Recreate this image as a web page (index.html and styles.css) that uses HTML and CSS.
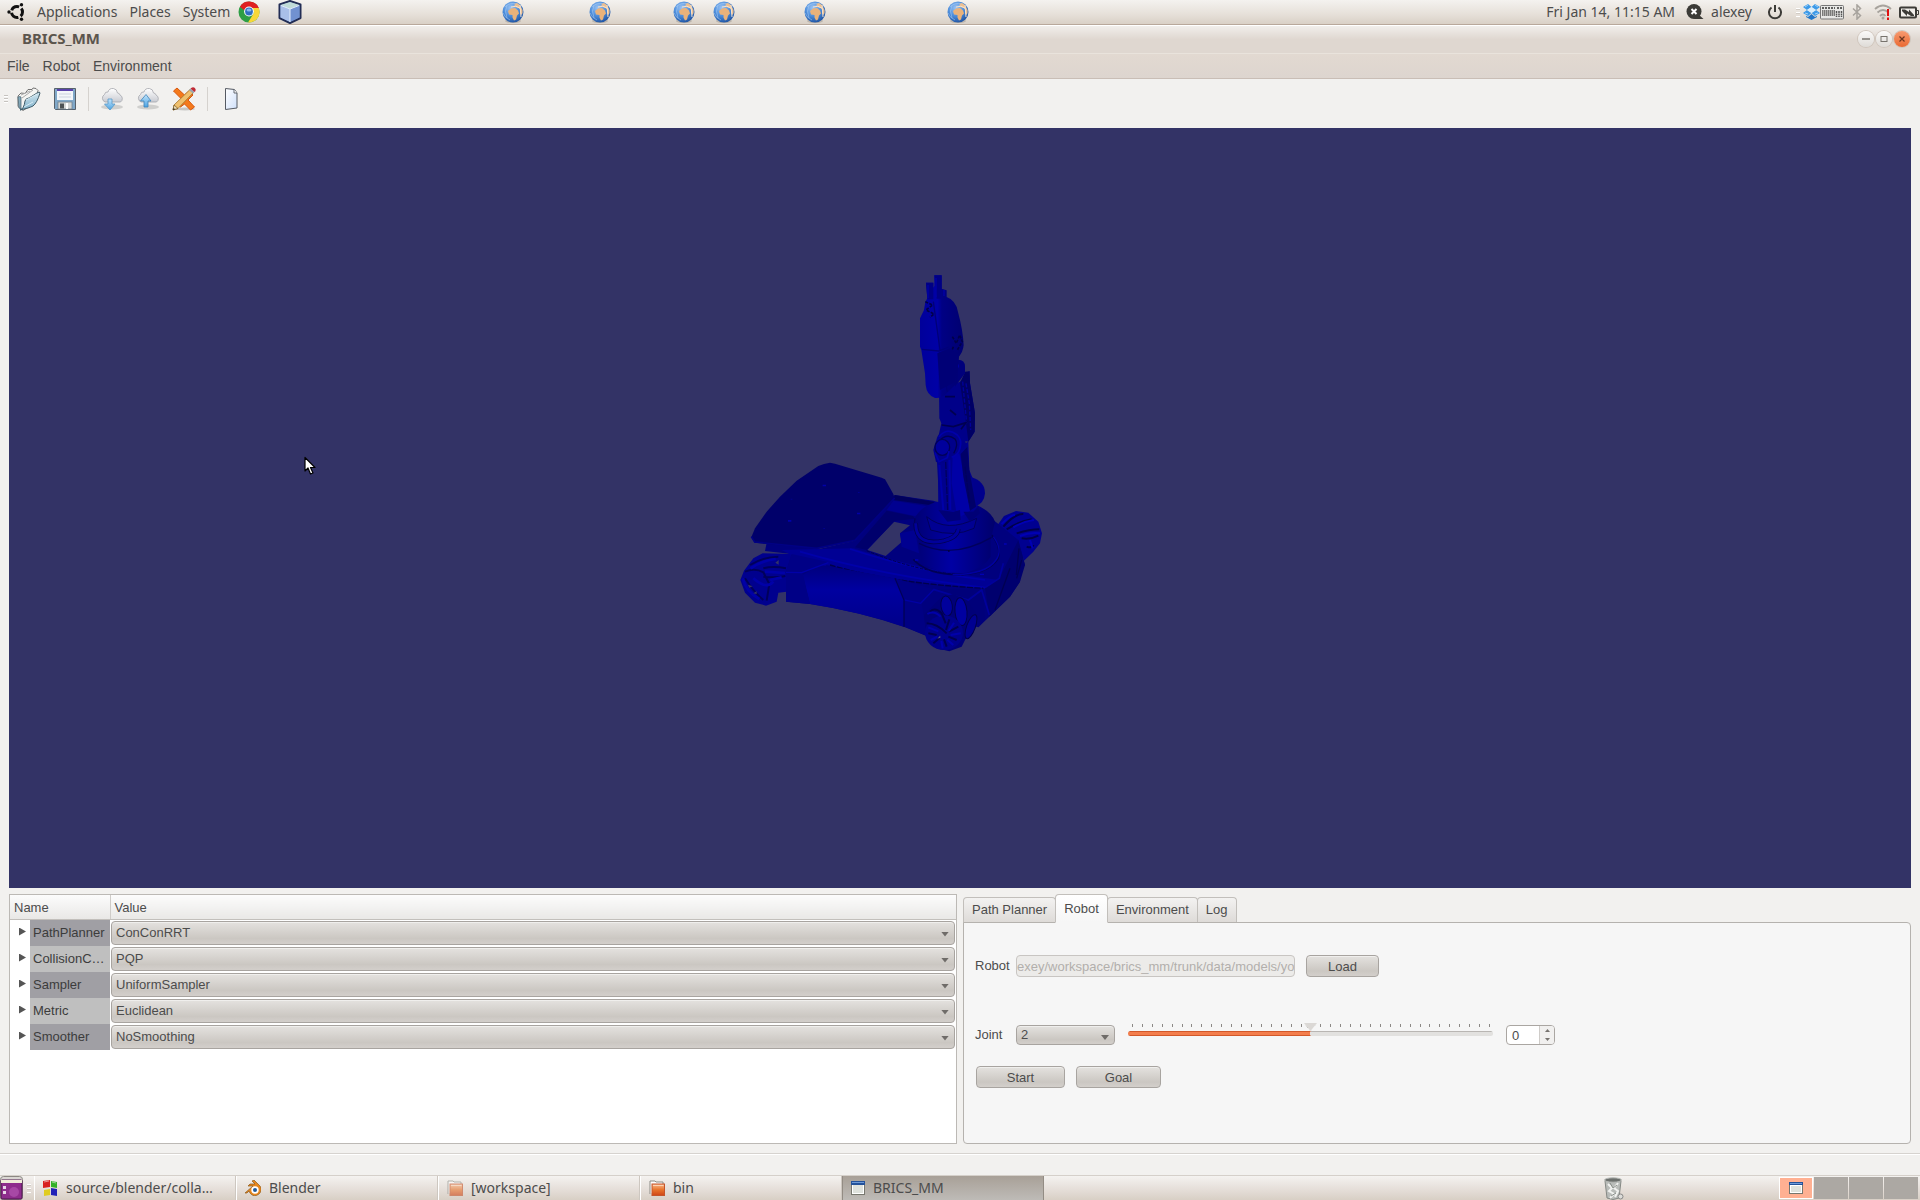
FILE: index.html
```html
<!DOCTYPE html>
<html lang="en">
<head>
<meta charset="utf-8">
<title>BRICS_MM</title>
<link rel="stylesheet" href="styles.css">
</head>
<body>
<svg class="defs" width="0" height="0" aria-hidden="true">
  <defs>
    <radialGradient id="sea" cx="40%" cy="30%" r="75%"><stop offset="0" stop-color="#9cc4f4"/><stop offset=".5" stop-color="#4f8fdc"/><stop offset="1" stop-color="#1c4f9e"/></radialGradient>
    <linearGradient id="sheet" x1="0" y1="0" x2="1" y2="1"><stop offset="0" stop-color="#fff"/><stop offset="1" stop-color="#cfe0fb"/></linearGradient>
    <linearGradient id="folder" x1="0" y1="0" x2="0" y2="1"><stop offset="0" stop-color="#d3e8f1"/><stop offset="1" stop-color="#7fb0c9"/></linearGradient>
    <linearGradient id="cloud" x1="0" y1="0" x2="0" y2="1"><stop offset="0" stop-color="#fff"/><stop offset="1" stop-color="#c9cbd2"/></linearGradient>
    <linearGradient id="arrow" x1="0" y1="0" x2="0" y2="1"><stop offset="0" stop-color="#c3e4fa"/><stop offset="1" stop-color="#4ba3e3"/></linearGradient>
    <linearGradient id="orange" x1="0" y1="0" x2="0" y2="1"><stop offset="0" stop-color="#f9b98c"/><stop offset=".5" stop-color="#e8742c"/><stop offset="1" stop-color="#cf4415"/></linearGradient>
  </defs>
  <symbol id="globe" viewBox="0 0 22 22">
    <ellipse cx="11" cy="20" rx="8" ry="2" fill="#000" opacity=".15"/>
    <circle cx="11" cy="11" r="10.500" fill="url(#sea)"/>
    <path d="M3 6Q8 1 15 3M1 12Q3 17 8 19M5 4Q2 10 5 17" fill="none" stroke="#a9ccf4" stroke-width=".8" opacity=".7"/>
    <path d="M6 10l3-2.500 4-.5 3 2.500 1 3-2 2-1 4-2 1-1.500-3V14L7 13.500z" fill="#eab27a"/>
    <path d="M12 3l3-1 3 2 2.500 5v3l-1 2-1.500-2 .5-3-2-2-3-1-2-1 2-1z" fill="#edbf90"/>
    <path d="M9 6q5-2 9 1M18 4l1 12" stroke="#f7e3cd" stroke-width="1" fill="none"/>
  </symbol>
  <symbol id="window" viewBox="0 0 14 14">
    <rect x=".5" y=".5" width="13" height="13" fill="#fff" stroke="#77776f"/><rect width="14" height="4" fill="#24529a"/><rect x="1" y="1" width="12" height="1" fill="#6d9ad8"/><rect x="2" y="4" width="10" height="8" fill="#dfe2dd"/>
  </symbol>
  <symbol id="files" viewBox="0 0 16 16">
    <path d="M1 14V1h5l1 1h7v4" fill="#fff" stroke="#8a8a84"/><rect x="3" y="4" width="12.500" height="11.500" fill="url(#orange)" stroke="#c4542a"/><path d="M4 5.500h10.500" stroke="#fbd3b5"/>
  </symbol>
</svg>

<header class="panel">
  <nav class="panel-menu" aria-label="Desktop">
    <svg width="18" height="18" viewBox="0 0 18 18" aria-hidden="true"><circle cx="10" cy="9" r="5.500" fill="none" stroke="#111" stroke-width="3" stroke-dasharray="9 2.500" stroke-dashoffset="4.500"/><circle cx="2" cy="9" r="1.700" fill="#111"/><circle cx="14.500" cy="1.800" r="1.700" fill="#111"/><circle cx="14.500" cy="16.200" r="1.700" fill="#111"/></svg>
    <a href="#applications">Applications</a>
    <a href="#places">Places</a>
    <a href="#system">System</a>
    <a class="browser" href="#browser" aria-label="Browser"><svg width="22" height="22" viewBox="0 0 22 22"><circle cx="11" cy="11" r="10.500" fill="#2e9e45"/><path d="M1.900 5.800A10.500 10.500 0 0 1 20.800 7H11a5 5 0 0 0-4.500 2.500z" fill="#e02020"/><path d="M20.800 7A10.500 10.500 0 0 1 10 21.400l5-8A5 5 0 0 0 13 7z" fill="#f8d838"/><circle cx="11" cy="10.500" r="4.900" fill="#fff"/><circle cx="11" cy="10.500" r="3.900" fill="#2f6fc0"/><ellipse cx="11" cy="9" rx="2.500" ry="1.500" fill="#8ab8ec"/></svg></a>
    <a class="cube" href="#cube" aria-label="Virtual machines"><svg width="24" height="24" viewBox="0 0 24 24"><path d="M12 1l10.500 3.500V18L12 23 1.500 18V4.500z" fill="#7fa0d8" stroke="#222d55" stroke-width="2" stroke-linejoin="round"/><path d="M2.500 5L12 2l9.500 3L12 9z" fill="#c0dcd8"/><path d="M2.500 5L12 9v13l-9.500-4.500z" fill="#a9bfe8"/><path d="M21.500 5L12 9v13l9.500-4.500z" fill="#7191d0"/><path d="M12 9v13M3 5.500l9 3.500 9-3.500" stroke="#e4eefc" fill="none"/></svg></a>
  </nav>
  <div class="launchers">
    <a href="#web1" aria-label="Web 1"><svg width="22" height="22"><use href="#globe"/></svg></a>
    <a href="#web2" aria-label="Web 2"><svg width="22" height="22"><use href="#globe"/></svg></a>
    <a href="#web3" aria-label="Web 3"><svg width="22" height="22"><use href="#globe"/></svg></a>
    <a href="#web4" aria-label="Web 4"><svg width="22" height="22"><use href="#globe"/></svg></a>
    <a href="#web5" aria-label="Web 5"><svg width="22" height="22"><use href="#globe"/></svg></a>
    <a href="#web6" aria-label="Web 6"><svg width="22" height="22"><use href="#globe"/></svg></a>
  </div>
  <div class="tray">
    <span class="clock">Fri Jan 14, 11:15 AM</span>
    <svg width="18" height="18" viewBox="0 0 18 18" aria-hidden="true"><circle cx="8" cy="8.500" r="7.500" fill="#3c3b37"/><path d="M11 10l6.500 6H8z" fill="#3c3b37"/><path d="M5.500 6l5 5m0-5l-5 5" stroke="#fff" stroke-width="2"/></svg>
    <span class="user">alexey</span>
    <svg width="16" height="16" viewBox="0 0 16 16" aria-hidden="true"><path d="M4.500 3.500a6 6 0 1 0 7 0M8 1v7" fill="none" stroke="#3c3b37" stroke-width="2"/></svg>
    <div class="status">
      <span class="grip"></span>
      <svg width="17" height="16" viewBox="0 0 17 16" aria-hidden="true"><path d="M5 0l3.500 3L4 6 0 3zM12 0L8.500 3 13 6l4-3zM0 9l4-3 4.500 3L5 12zM17 9l-4-3-4.500 3 3.500 3z" fill="#3d9ae8"/><path d="M8.500 3L13 6 8.500 9 4 6z" fill="#d9eefc"/><path d="M3 12v1l5.500 3 5.500-3v-1l-2 1-3.500-3L5 13z" fill="#2377c8"/><path d="M2 3l3-2M12 1l3 2M2 9l3 1M15 9l-3 1" stroke="#9fd2f8"/></svg>
      <svg width="24" height="15" viewBox="0 0 24 15" aria-hidden="true"><rect x=".5" y=".5" width="23" height="13.500" rx="1" fill="#e8e8e6" stroke="#777"/><path d="M2 3h13M17 3h5" stroke="#333" stroke-width="1.500" stroke-dasharray="2 1"/><path d="M2 6h13M2 8h13M2 10h13" stroke="#555" stroke-width="1.700" stroke-dasharray="1.500 .5"/><path d="M16.500 6v6M19 6v6M21.500 6v6" stroke="#555" stroke-width="1.500" stroke-dasharray="2 .5"/></svg>
      <svg class="bluetooth" width="10" height="16" viewBox="0 0 10 16" aria-hidden="true"><path d="M1 4.500l7.500 7L5 15V1l3.500 3.500-7.500 7" fill="none" stroke="#a7a39d" stroke-width="1.500"/></svg>
      <svg class="wifi" width="18" height="16" viewBox="0 0 18 16" aria-hidden="true"><path d="M1 5q8-7 16 0M3.500 8.500q5.500-5 11 0M6 12q3-3 5.500 0" fill="none" stroke="#a7a39d" stroke-width="1.800"/><circle cx="9" cy="14" r="1.500" fill="#a7a39d"/><path d="M14 5v7m0 1.500V16" stroke="#e01010" stroke-width="2"/></svg>
      <svg width="20" height="13" viewBox="0 0 20 13" aria-hidden="true"><rect x="1" y="1.500" width="16" height="10" rx="1" fill="#f0eeea" stroke="#3c3b37" stroke-width="2"/><path d="M18 4.500h1.500v4H18" stroke="#3c3b37" fill="none"/><path d="M3 3.500h3l4 2.500V3.500l5 5.500v1h-3L8 7.500V10L3 5z" fill="#3c3b37"/></svg>
    </div>
  </div>
</header>

<main class="app">
  <div class="titlebar">
    <h1>BRICS_MM</h1>
    <div class="window-buttons">
      <button aria-label="Minimize"><svg width="8" height="8"><path d="M0 4h8" stroke="#77736d" stroke-width="1.500"/></svg></button>
      <button aria-label="Maximize"><svg width="8" height="8"><rect x="1" y="1.500" width="6" height="5" fill="none" stroke="#77736d"/></svg></button>
      <button class="close" aria-label="Close"><svg width="8" height="8"><path d="M1.500 1.500l5 5m0-5l-5 5" stroke="#6b3620" stroke-width="1.200"/></svg></button>
    </div>
  </div>
  <nav class="menubar" aria-label="Application"><a href="#file">File</a><a href="#robot">Robot</a><a href="#environment">Environment</a></nav>

  <div class="toolbar" role="toolbar" aria-label="Main">
    <span class="grip dark"></span>
    <button aria-label="Open"><svg width="24" height="24" viewBox="0 0 24 24"><path d="M1 9l3-3 4 .5 3-4h4l1-1.500 3 .5 2 2-4 13-11 7-5-4z" fill="#f5f5f3" stroke="#666" stroke-width=".9"/><path d="M4 8l9-4M5 11l11-8" stroke="#aaa"/><path d="M1 10q2-1 3 0v12l-2-1z" fill="#86aabb" stroke="#44606d" stroke-width=".7"/><path d="M3 23q4-1 5-9 1-3 4-3l8-5q3-2 3 0-3 10-7 13-2 1-5 2z" fill="url(#folder)" stroke="#3f5c69"/><path d="M9 13l11-6M7 20l9-5" stroke="#e6f5fb" stroke-width=".8"/></svg></button>
    <button aria-label="Save"><svg width="24" height="24" viewBox="0 0 24 24"><path d="M1.500 1.500h21v21h-20l-1-1z" fill="#80a8c8" stroke="#57616b"/><rect x="4" y="2" width="16" height="11" fill="#f3f6fa"/><path d="M4 3h16" stroke="#5a43ab" stroke-width="2"/><path d="M6 7h12M6 10h12" stroke="#ccd3df"/><rect x="5" y="15" width="14" height="7" fill="#d5d7d5" stroke="#6b7a86" stroke-width=".7"/><rect x="7" y="16.500" width="4" height="5" fill="#4d5254"/><path d="M14 16v6" stroke="#fff" stroke-width="2"/></svg></button>
    <span class="separator"></span>
    <button aria-label="Download"><svg width="24" height="24" viewBox="0 0 24 24"><ellipse cx="12" cy="20" rx="11" ry="2.500" fill="#000" opacity=".14"/><path d="M5 15a4.200 4.200 0 0 1-.5-7.500Q5 4.500 8 5q1-4 5.500-3.500Q17 2 17.500 6q2 0 2.500 2a4 4 0 0 1 .5 7z" fill="url(#cloud)" stroke="#a4a6ac" stroke-width=".8"/><path d="M8 12h4v5h3l-5 6-5.500-6H8z" fill="url(#arrow)" stroke="#5598c8" stroke-width=".8"/></svg></button>
    <button aria-label="Upload"><svg width="24" height="24" viewBox="0 0 24 24"><ellipse cx="12" cy="20" rx="11" ry="2.500" fill="#000" opacity=".14"/><path d="M5 15a4.200 4.200 0 0 1-.5-7.500Q5 4.500 8 5q1-4 5.500-3.500Q17 2 17.500 6q2 0 2.500 2a4 4 0 0 1 .5 7z" fill="url(#cloud)" stroke="#a4a6ac" stroke-width=".8"/><path d="M8 20h4v-6h3L10 7.500 4.500 14H8z" fill="url(#arrow)" stroke="#3d83ba" stroke-width=".8"/></svg></button>
    <button aria-label="Clear"><svg width="24" height="24" viewBox="0 0 24 24"><ellipse cx="13" cy="22" rx="10" ry="1.500" fill="#000" opacity=".18"/><path d="M1.500 4L5 1l7.500 7L17 4l4 4-5 5 6.500 7-4 3-6-6-4 3-4-3 5-5z" fill="#f47a1c" stroke="#d9560d"/><path d="M1 23l1-5L18 2.500l3.500 3L6 21.500z" fill="#efc06e" stroke="#a3712b" stroke-width=".8"/><path d="M1 23l1-5 4 3.500z" fill="#eadbb5" stroke="#71551f" stroke-width=".7"/><path d="M1 23l.6-2 1.500 1.200z" fill="#222"/><path d="M17 3l1.500-1.500 4 3.500L21 6.500z" fill="#9aa5b0"/><path d="M18.500 1.500Q22-1 23.500 2q.5 2-1 3z" fill="#c02a35"/></svg></button>
    <span class="separator"></span>
    <button aria-label="New"><svg width="24" height="24" viewBox="0 0 24 24"><path d="M6.500 1.500l9 1L18 6v15l-11.500 1.500z" fill="url(#sheet)" stroke="#555a63" stroke-linejoin="round"/><path d="M15 2.500V6h3" fill="#fff" stroke="#555a63" stroke-width=".9"/></svg></button>
  </div>

  <section class="viewport" aria-label="3D view">
    <svg class="robot" width="340" height="410" viewBox="0 0 1020 1230" role="img" aria-label="Mobile manipulator">
      <defs>
        <linearGradient id="skirt" x1="0" y1="0" x2="0" y2="1"><stop offset="0" stop-color="#00007c"/><stop offset=".4" stop-color="#0000a0"/><stop offset="1" stop-color="#00008a"/></linearGradient>
        <linearGradient id="drum" x1="0" y1="0" x2="1" y2="0"><stop offset="0" stop-color="#000074"/><stop offset=".45" stop-color="#0000a4"/><stop offset="1" stop-color="#00006c"/></linearGradient>
        <linearGradient id="head" x1="0" y1="0" x2="1" y2="0"><stop offset="0" stop-color="#00009a"/><stop offset=".4" stop-color="#0000a6"/><stop offset=".5" stop-color="#000084"/><stop offset="1" stop-color="#000070"/></linearGradient>
      </defs>
      <!-- rear wheel -->
      <path d="M828 832L852 798 888 783 925 788 955 815 966 850 960 880 940 905 912 932 890 870z" fill="#000090"/>
      <path d="M850 830q35-40 60-38M860 838q40-25 75-30M890 850q40-12 68-12M905 865q25 5 50-8M920 890q18 5 20-5" stroke="#00004a" stroke-width="6" fill="none"/>
      <path d="M845 822q25-26 40-28M880 832q30-18 62-22M900 858q30-12 60-8M930 870l8 25" stroke="#0000b4" stroke-width="6" fill="none"/>
      <!-- front-left wheel -->
      <path d="M61 990L72 962 100 925 128 910 215 912 200 1025 175 1028 170 1055 138 1067 105 1058 75 1028z" fill="#00008e"/>
      <path d="M75 965q30-12 55 2l18 35-8 50M90 945q40-25 85-25M130 955q30-8 68 0M75 985q25 40 55 65M130 980q40 4 66-2" stroke="#00005a" stroke-width="6" fill="none"/>
      <path d="M92 955q30-22 75-28M135 965l60 4M150 990l35-8M100 985q40 35 60 10M68 985q10 40 50 62" stroke="#0000a8" stroke-width="8" fill="none"/>
      <path d="M84 1004l14 5-10 4zM166 938l10-8v14zM100 1030l10-6v8z" fill="#333366"/>
      <!-- chassis -->
      <path fill-rule="evenodd" d="M140 878L300 896 405 872 524 735 640 752 820 810 870 850 895 870 915 945 902 960 900 995 870 1040 808 1100 775 1132 720 1120 620 1158 555 1132Q420 1085 270 1062L198 1055V965L215 912 135 903zM442 900L497 918 545 876 540 850 570 826 522 815z" fill="#00007e"/>
      <path d="M524 735L640 755 650 768 520 750z" fill="#00005c"/>
      <path d="M520 752L640 772 585 798 500 780z" fill="#000090"/>
      <path d="M500 782l80 17 5 8-60 5-85 88-35-8z" fill="#00006c"/>
      <path d="M185 900L400 895Q600 960 835 990L795 1013Q600 1010 320 945L300 960z" fill="#000094"/>
      <path d="M240 905Q500 980 795 1013M390 897Q600 965 795 990" stroke="#0000aa" stroke-width="5" fill="none"/>
      <path d="M330 945Q520 1000 790 1015" stroke="#00004c" stroke-width="4" fill="none" stroke-dasharray="18 4"/>
      <path d="M440 902Q590 965 730 975" stroke="#000050" stroke-width="3" fill="none" stroke-dasharray="10 4"/>
      <path d="M300 945Q420 965 525 985L552 1050V1130Q420 1085 270 1062L248 975z" fill="url(#skirt)"/>
      <path d="M198 965L215 912 325 936 248 970 270 1062 198 1055z" fill="#000086"/>
      <path d="M198 967L245 968 325 938" stroke="#0000a8" stroke-width="4" fill="none"/>
      <path d="M525 985L640 1018 605 1060 620 1158 555 1130V1052z" fill="#000083"/>
      <path d="M527 990L552 1050 602 1060 642 1018" stroke="#0000a4" stroke-width="4" fill="none"/>
      <path d="M525 985L552 1050V1130" stroke="#000058" stroke-width="4" fill="none"/>
      <path d="M640 1018L790 1016 795 1110 775 1132 745 1060z" fill="#00007a"/>
      <path d="M795 1013L838 985 895 870 915 945 900 995 870 1040 808 1100z" fill="#00006e"/>
      <path d="M640 1018L745 1050 785 1020 808 1095M795 1013L838 985 850 940" stroke="#00009c" stroke-width="5" fill="none"/>
      <path d="M905 930L890 985M870 955l-45 125M897 895l-8 80" stroke="#000052" stroke-width="4" fill="none"/>
      <path d="M810 850q35 35 25 75-35 55-145 48-75-6-110-45" fill="none" stroke="#000056" stroke-width="5"/>
      <path d="M820 860q30 40 8 70-30 44-130 44" fill="none" stroke="#0000a0" stroke-width="4"/>
      <path d="M540 850l45-10 12 70-52-20z" fill="#000090"/>
      <!-- top plate -->
      <path d="M330 638Q312 640 295 648L230 692 180 740 140 785 105 835 94 862 104 878 290 896 405 872 524 745 520 732 495 688 485 683 345 641z" fill="#00006a"/>
      <path d="M94 860l10 16 186 19 115-24L524 744" fill="none" stroke="#000084" stroke-width="5"/>
      <path d="M308 704h10v5h-10zM411 788h10v5h-10zM204 810h10v5h-10z" fill="#0000a8"/>
      <path d="M414 726h5v3h-5zM212 746h5v3h-5zM310 834h5v3h-5z" fill="#00008c"/>
      <!-- turntable -->
      <path d="M585 805Q600 770 650 755L770 765Q815 785 825 815L812 870V920Q795 950 740 968 660 975 605 940L597 890z" fill="url(#drum)"/>
      <path d="M585 805q-8 45 25 70M597 880q100 50 218-18" fill="none" stroke="#00005c" stroke-width="4"/>
      <path d="M620 800q60 50 150 5l-8 30q-60 28-130 5z" fill="#000092" stroke="#00005c" stroke-width="3"/>
      <path d="M587 820q0 70 85 52 40-10 43-35" fill="none" stroke="#000054" stroke-width="14"/>
      <path d="M587 820q0 70 85 52 40-10 43-35" fill="none" stroke="#00009a" stroke-width="9"/>
      <path d="M684 901h5v4h-5z" fill="#000038"/><path d="M585 930h10M780 973h12M852 882h8" stroke="#0000b4" stroke-width="4"/>
      <!-- lower arm -->
      <path d="M755 682Q795 695 795 730 793 760 765 770L745 760z" fill="#00008c"/>
      <path d="M650 620L745 575 748 660 758 685 772 770 760 785 655 780 654 690z" fill="#00008e"/>
      <path d="M698 620L718 610 735 690 750 782 722 800 708 780 695 700z" fill="#0000a6"/>
      <path d="M742 590L748 660 768 770 750 782 730 680 722 612z" fill="#000068"/>
      <path d="M658 645l12 135M688 630l3 150" stroke="#0000a8" stroke-width="6"/><path d="M677 635l6 145M735 650l14 110" stroke="#00005e" stroke-width="4" stroke-dasharray="22 3"/>
      <path d="M655 780l45 5 20-5 2 30-40 5zM730 785l30 0 15-15 5 20-30 25z" fill="#000076"/>
      <!-- middle arm and elbow -->
      <path d="M657 420L720 395 748 362 750 400 765 490 764 545 745 575 655 560 664 520 658 505z" fill="#000089"/>
      <path d="M720 400L735 365 749 364 750 400 765 490 764 545 745 575 738 520z" fill="#000064"/>
      <path d="M738 400l10 60 4 80M728 395l12 125" stroke="#00009a" stroke-width="4" fill="none" stroke-dasharray="12 5"/>
      <path d="M665 525l35 5 38-12-15 20M675 440h30M690 480l18 15" stroke="#000050" stroke-width="5" fill="none"/>
      <path d="M652 560Q665 535 690 537 725 540 735 570L740 590 700 620 670 640 648 636 640 600z" fill="#00008a"/>
      <path d="M657 560q25-30 55-5 15 15 8 40-5 20-25 27" fill="none" stroke="#0000aa" stroke-width="5"/>
      <path d="M655 575q25-28 50-8 12 15-4 43" fill="none" stroke="#000052" stroke-width="4"/>
      <ellipse cx="667" cy="592" rx="22" ry="24" fill="#00009c" stroke="#00005a" stroke-width="4"/>
      <path d="M645 608l12 27 25-12 5-20" fill="none" stroke="#0000aa" stroke-width="5"/>
      <!-- wrist and gripper -->
      <path d="M705 330Q735 325 735 350V370L705 410z" fill="#00007b"/><circle cx="710" cy="348" r="7" fill="#0000ae"/>
      <path d="M618 98h22v15l3-5V76h22v40l15 5v20q28 10 34 45 15 55 17 100-2 20-15 35L712 398 680 430Q665 446 645 444 620 435 617 405L615 370 604 300 600 290V205L612 180 616 155 622 145z" fill="url(#head)"/>
      <path d="M618 98h22v50h-18zM643 76h22v70h-15z" fill="#000084"/><path d="M624 105v40M648 84v58M672 120v18" stroke="#0000a8" stroke-width="4"/>
      <path d="M640 155l20 145M606 298l50 5 30-12M660 306l22 120" fill="none" stroke="#000078" stroke-width="4"/>
      <path d="M616 155l22 10-20 15 24 12-12 10M697 260l12 20 10-25 8 20-15 25M700 290l-8 22 18 15" fill="none" stroke="#000048" stroke-width="5" stroke-dasharray="9 4"/>
      <path d="M690 295l28 20-15 82-43 23-8-110z" fill="#000076"/>
      <!-- front wheel -->
      <path d="M612 1095L635 1070 665 1040 700 1032 740 1050 772 1095 770 1120 735 1170 725 1190 688 1204 650 1195 620 1165z" fill="#000078"/>
      <ellipse cx="680" cy="1068" rx="17" ry="30" fill="#00009c" stroke="#00004c" stroke-width="3" transform="rotate(-8 680 1068)"/>
      <ellipse cx="723" cy="1085" rx="18" ry="42" fill="#0000a0" stroke="#00004c" stroke-width="3" transform="rotate(-5 723 1085)"/>
      <ellipse cx="753" cy="1130" rx="13" ry="38" fill="#000090" stroke="#00004c" stroke-width="3" transform="rotate(20 753 1130)"/>
      <ellipse cx="672" cy="1148" rx="57" ry="52" fill="#00008a"/>
      <path d="M630 1085q15-15 35 5l12 30M620 1120q30 0 60 30M625 1150l25 5M640 1180l18-15M680 1190l-8-22M710 1170l-25-10M715 1130l-28 15M688 1108l-10 32" stroke="#000050" stroke-width="6" fill="none"/>
      <path d="M622 1092q20-12 40 8M625 1132l30 12M632 1170l20-10M668 1195l-4-22M700 1185l-18-16M722 1150l-30 5M702 1118l-16 25" stroke="#0000aa" stroke-width="6" fill="none"/>
      <path d="M652 1166l8-8v5zM655 1162l6-5v7z" fill="#555580"/>
    </svg>
    <svg class="pointer" width="12" height="20" viewBox="0 0 12 20" aria-hidden="true"><path d="M1 1.500V15l3-3 2.500 6 2.500-1-2.500-5.500H11z" fill="#fff" stroke="#000" stroke-width="1.200" stroke-linejoin="round"/></svg>
  </section>

  <div class="lower">
    <section class="tree" aria-label="Properties">
      <table>
        <thead><tr><th class="name-col">Name</th><th>Value</th></tr></thead>
        <tbody>
          <tr><td><div class="node"><button class="expander" aria-label="Expand PathPlanner"></button><label for="planner">PathPlanner</label></div></td><td class="value"><span class="combo"><select id="planner"><option>ConConRRT</option></select></span></td></tr>
          <tr><td><div class="node"><button class="expander" aria-label="Expand collision checker"></button><label for="collision">CollisionC…</label></div></td><td class="value"><span class="combo"><select id="collision"><option>PQP</option></select></span></td></tr>
          <tr><td><div class="node"><button class="expander" aria-label="Expand Sampler"></button><label for="sampler">Sampler</label></div></td><td class="value"><span class="combo"><select id="sampler"><option>UniformSampler</option></select></span></td></tr>
          <tr><td><div class="node"><button class="expander" aria-label="Expand Metric"></button><label for="metric">Metric</label></div></td><td class="value"><span class="combo"><select id="metric"><option>Euclidean</option></select></span></td></tr>
          <tr><td><div class="node"><button class="expander" aria-label="Expand Smoother"></button><label for="smoother">Smoother</label></div></td><td class="value"><span class="combo"><select id="smoother"><option>NoSmoothing</option></select></span></td></tr>
        </tbody>
      </table>
    </section>

    <section class="tabs">
      <div class="tablist" role="tablist">
        <button role="tab">Path Planner</button><button role="tab" class="active" aria-selected="true">Robot</button><button role="tab">Environment</button><button role="tab">Log</button>
      </div>
      <div class="pane" role="tabpanel">
        <div class="row file-row">
          <label for="model">Robot</label>
          <input id="model" class="path" type="text" value="exey/workspace/brics_mm/trunk/data/models/yo" disabled>
          <button class="push load">Load</button>
        </div>
        <div class="row joint-row">
          <label for="joint">Joint</label>
          <span class="combo"><select id="joint"><option>2</option></select></span>
          <div class="slider">
            <svg class="ticks" height="3" viewBox="0 0 358 3" preserveAspectRatio="none" aria-hidden="true"><path d="M0 1.500H358" stroke="#8c8986" stroke-width="3" pathLength="3571" stroke-dasharray="10 88.900" shape-rendering="crispEdges"/></svg>
            <input type="range" min="-100" max="100" value="0" aria-label="Joint position">
          </div>
          <div class="spin">
            <input type="number" value="0" aria-label="Joint value">
            <span class="steps"><button aria-label="Increase"><svg width="5" height="3"><path d="M0 3h5L2.500 0z" fill="#77736f"/></svg></button><button aria-label="Decrease"><svg width="5" height="3"><path d="M0 0h5L2.500 3z" fill="#77736f"/></svg></button></span>
          </div>
        </div>
        <div class="row actions">
          <button class="push start">Start</button>
          <button class="push goal">Goal</button>
        </div>
      </div>
    </section>
  </div>
  <div class="statusbar"></div>
</main>

<footer class="taskbar">
  <button class="desktop" aria-label="Show desktop"><svg width="23" height="24" viewBox="0 0 23 24"><rect x=".5" y=".5" width="22" height="23" rx="3" fill="#d9d6d2" stroke="#8b8883"/><rect x="1" y="4" width="21" height="19" rx="1" fill="#8e2d8c" stroke="#4d164c"/><rect x="1" y="4" width="21" height="3" fill="#efedd8"/><circle cx="14" cy="16" r="5" fill="#b85ab5" opacity=".6"/><path d="M3 10h3v3H3zM3 15h3v3H3z" fill="#e8d6e8"/></svg></button>
  <span class="grip"></span>
  <div class="tasks">
    <button><svg width="15" height="17" viewBox="0 0 15 17"><path d="M0 1l7-1v7L0 8z" fill="#d82020"/><path d="M8 1l6 1v6l-6-1z" fill="#33b028"/><path d="M1 10l6-1v6l-6 1z" fill="#e0cc20"/><path d="M8 8l6 1v7l-6-1z" fill="#2222b8"/><path d="M1 2l5-1M9 2l4 1" stroke="#fff" opacity=".5"/></svg><span>source/blender/colla…</span></button>
    <button><svg width="16" height="16" viewBox="0 0 16 16"><path d="M0 13l8-7H3l2-2h5L7 1l2-1 6 6q3 4-1 8-5 4-9-1l-1-2-2 2z" fill="#e8861c" stroke="#8a5a1c" stroke-width=".7"/><circle cx="10" cy="10" r="3.700" fill="#fff"/><circle cx="10" cy="10" r="2" fill="#225a9a"/></svg><span>Blender</span></button>
    <button class="minimized"><svg width="16" height="16"><use href="#files"/></svg><span>[workspace]</span></button>
    <button><svg width="16" height="16"><use href="#files"/></svg><span>bin</span></button>
    <button class="current"><svg width="14" height="14"><use href="#window"/></svg><span>BRICS_MM</span></button>
  </div>
  <button class="trash" aria-label="Trash"><svg width="22" height="23" viewBox="0 0 22 23"><path d="M2 4l2 17q6 3 12 0l2-17z" fill="#b9bcb9" stroke="#858985"/><path d="M5 7l4 4-3 3 5 3-4 4M15 6l-4 5 4 3-3 6" fill="none" stroke="#f1f2f0" stroke-width="2"/><path d="M7 6l3 5 4-3M8 19l5-3" fill="none" stroke="#8a8f8a"/><ellipse cx="10" cy="3" rx="8.500" ry="2.200" fill="#6c706d" stroke="#b7bab7"/><circle cx="17.500" cy="19.500" r="2.500" fill="#dcdcd8" stroke="#888"/></svg></button>
  <div class="workspaces">
    <button class="on" aria-label="Workspace 1"><svg width="14" height="12" viewBox="0 0 14 12"><rect x=".5" y=".5" width="13" height="11" fill="#fff" stroke="#77776f"/><path d="M0 1.500h14" stroke="#24529a" stroke-width="3"/><path d="M1 1.500h12" stroke="#6d9ad8"/><rect x="2" y="4" width="10" height="6" fill="#dfe2dd"/></svg></button><button aria-label="Workspace 2"></button><button aria-label="Workspace 3"></button><button aria-label="Workspace 4"></button>
  </div>
</footer>
</body>
</html>
```
FILE: styles.css
```css
* { box-sizing: border-box; }

body {
  margin: 0;
  min-height: 100vh;
  display: flex;
  flex-direction: column;
  background: #f2f1ef;
  color: #4c4c4c;
  font: 13px/16px "Liberation Sans", Arial, sans-serif;
}

a { color: inherit; text-decoration: none; }
svg { display: block; flex: none; }
button, input, select { font: inherit; color: inherit; margin: 0; }
button { padding: 0; border: 0; background: none; }
.defs { position: absolute; }

/* Top desktop panel */
.panel {
  display: flex;
  align-items: center;
  height: 25px;
  background: linear-gradient(#f4f2ef, #e6e0d9 60%, #d9d0c6);
  border-bottom: 1px solid #b8a89b;
  font: 14px/24px "Noto Sans", "Open Sans", sans-serif;
}
.panel-menu { display: flex; align-items: center; gap: 12px; width: 502px; padding-left: 7px; }
.browser { margin-left: -4px; }
.cube { margin-left: 6px; }
.launchers { display: grid; grid-template-columns: 87px 84px 40px 91px 143px 22px; }
.tray { display: flex; align-items: center; margin-left: auto; padding-right: 1px; }
.clock { margin-right: 11px; }
.user { margin: 0 15px 0 7px; }
.status { display: flex; align-items: center; margin-left: 13px; }
.status .grip { margin-right: 3px; }
.bluetooth { margin: 0 12px 0 8px; }
.wifi { margin-right: 7px; }

.grip {
  width: 4px;
  height: 9px;
  background: repeating-linear-gradient(#fff 0 1px, #d2ccc5 1px 2px, transparent 2px 4px);
}
.grip.dark { background: repeating-linear-gradient(#c6c3bf 0 1px, #fff 1px 2px, transparent 2px 3px); }

/* Application window */
.app { flex: 1; display: flex; flex-direction: column; }
.titlebar {
  display: flex;
  align-items: center;
  justify-content: space-between;
  height: 28px;
  padding: 0 10px 2px 22px;
  border-top: 1px solid #fff;
  background: linear-gradient(#f1eeeb, #dfd7d0 50%);
}
.titlebar h1 { margin: 0; font: bold 15px/25px "Noto Sans", "Open Sans", sans-serif; color: #5b554d; }
.window-buttons { display: flex; gap: 2px; }
.window-buttons button {
  display: grid;
  place-items: center;
  width: 16px;
  height: 16px;
  border-radius: 50%;
  background: linear-gradient(#fbfaf9, #dedbd7);
  box-shadow: 0 0 0 1px #cfc5bc;
}
.window-buttons .close { background: linear-gradient(#f79a70, #ea6a33); }
.menubar {
  display: flex;
  gap: 13px;
  height: 26px;
  padding-left: 7px;
  border-top: 1px solid #e9e3dc;
  border-bottom: 1px solid #c9beb6;
  background: linear-gradient(#e2d9d1, #ddd5cf);
  font-size: 14px;
  line-height: 25px;
}
.toolbar { display: flex; align-items: center; height: 40px; padding-left: 4px; }
.toolbar .grip { margin-right: 3px; }
.toolbar button { display: grid; place-items: center; width: 36px; height: 32px; }
.separator { width: 1px; height: 24px; margin: 0 5px; background: #d5d2ce; }

.viewport {
  position: relative;
  flex: 1;
  min-height: 420px;
  margin: 9px 9px 6px;
  background: #333366;
  overflow: hidden;
}
.robot { position: absolute; left: calc(50% - 240px); top: calc(50% - 258px); }
.pointer { position: absolute; left: 295px; top: 328px; }

.lower { display: grid; grid-template-columns: 1fr 1fr; gap: 6px; height: 250px; padding: 0 9px; }
.statusbar { height: 22px; margin-top: 9px; border-top: 1px solid #d6d3cf; box-shadow: inset 0 1px #fff; }

/* Property tree */
.tree { border: 1px solid #bcb9b5; background: #fff; min-width: 0; }
.tree table { width: 100%; border-collapse: collapse; table-layout: fixed; }
.tree th {
  height: 24px;
  padding: 2px 4px 0;
  text-align: left;
  font-weight: normal;
  background: linear-gradient(#fcfcfc, #e9e8e6);
  border-bottom: 1px solid #c2bfbb;
}
.tree .name-col { width: 100px; border-right: 1px solid #cfccc8; }
.tree td { height: 26px; padding: 0; }
.tree .value { padding: 0 1px; }
.node { display: grid; grid-template-columns: 20px 1fr; height: 26px; }
.node label {
  min-width: 0;
  padding: 0 0 0 3px;
  line-height: 26px;
  white-space: nowrap;
  color: #3c3c3c;
  background: #a09fa4;
}
tr:nth-child(even) .node label { background: #bfbfbf; }
.expander {
  align-self: center;
  width: 7px;
  height: 8px;
  margin: 0 0 2px 9px;
  background: #555;
  clip-path: polygon(0 0, 100% 50%, 0 100%);
}

/* Controls */
.combo { position: relative; display: block; }
.combo::after {
  content: "";
  position: absolute;
  right: 6px;
  bottom: 8px;
  width: 8px;
  height: 5px;
  background: #6f6c69;
  clip-path: polygon(0 0, 100% 0, 50% 100%);
}
.combo select, .push {
  border: 1px solid #a8a4a0;
  border-radius: 4px;
  background: linear-gradient(#e4e2df, #cbc7c2 75%, #d3cfcb);
  box-shadow: inset 0 1px #f0efed;
}
.combo select { display: block; width: 100%; height: 24px; padding: 0 4px; appearance: none; }
.push { height: 22px; padding-top: 2px; }

/* Tabs */
.tabs { display: flex; flex-direction: column; min-width: 0; }
.tablist { display: flex; align-items: flex-end; height: 29px; }
.tablist button {
  height: 26px;
  margin-right: -1px;
  padding: 0 8px;
  border: 1px solid #c2bfbb;
  border-bottom-color: #b5b2ae;
  border-radius: 4px 4px 0 0;
  background: linear-gradient(#f3f2f1, #dedbd8);
}
.tablist .active { z-index: 1; height: 29px; background: linear-gradient(#fff, #f6f6f6); border-bottom-color: #f6f6f6; }
.pane {
  flex: 1;
  margin-top: -1px;
  padding: 32px 11px 0;
  border: 1px solid #b5b2ae;
  border-radius: 0 4px 4px 4px;
  background: #f6f6f6;
}
.row { display: flex; align-items: center; }
.row label { width: 41px; }
.path {
  width: 279px;
  height: 22px;
  padding: 0;
  border: 1px solid #c8c5c2;
  border-radius: 4px;
  background: #ecebe9;
  color: #b2afac;
}
.load { width: 73px; margin-left: 11px; }
.joint-row { height: 22px; margin-top: 47px; }
.joint-row .combo { width: 99px; }
.joint-row .combo::after { bottom: 5px; }
.joint-row select { height: 20px; }
.slider { width: 365px; margin: 0 13px; padding-bottom: 6px; }
.ticks { width: 358px; margin: 0 auto; }
.slider input { display: block; width: 100%; height: 13px; appearance: none; background: none; }
.slider input::-webkit-slider-runnable-track {
  height: 5px;
  border-radius: 3px;
  background:
    linear-gradient(#d2592a 1px, transparent 1px 4px, #d2592a 4px) 0 0 / 50% 100% no-repeat,
    linear-gradient(#b9b6b3 1px, transparent 1px) 100% 0 / 50% 100% no-repeat,
    linear-gradient(90deg, #f47e4c 50%, #e2e1df 50%);
}
.slider input::-webkit-slider-thumb {
  appearance: none;
  width: 13px;
  height: 8px;
  margin-top: -8px;
  background:
    linear-gradient(to bottom left, transparent 50%, #86827e 50% 62%, transparent 62%) 0 0 / 50% 100% no-repeat,
    linear-gradient(to bottom right, transparent 50%, #86827e 50% 62%, transparent 62%) 100% 0 / 50% 100% no-repeat,
    #dbd8d5;
  clip-path: polygon(0 0, 100% 0, 50% 100%);
}
.spin {
  display: flex;
  width: 49px;
  height: 20px;
  border: 1px solid #aaa6a2;
  border-radius: 4px;
  background: #fff;
  overflow: hidden;
}
.spin input { width: 32px; padding: 1px 5px 0; border: 0; background: none; appearance: textfield; }
.spin input::-webkit-inner-spin-button { appearance: none; }
.steps { flex: 1; display: grid; border-left: 1px solid #cfccc9; background: #f1f0ef; }
.steps button { display: grid; place-items: center; }
.actions { gap: 11px; margin: 20px 0 0 1px; }
.start { width: 89px; }
.goal { width: 85px; }

/* Bottom desktop panel */
.taskbar {
  display: flex;
  align-items: center;
  height: 25px;
  border-top: 1px solid #d5d0ca;
  background: linear-gradient(#f4f2f0, #e4ddd7 60%, #d8cfc5);
  font: 14px/24px "Noto Sans", "Open Sans", sans-serif;
}
.taskbar .grip { margin: 0 3px 0 4px; }
.tasks { display: flex; }
.tasks button {
  display: flex;
  align-items: center;
  gap: 8px;
  width: 202px;
  height: 24px;
  padding: 0 8px;
  border-left: 1px solid #fff;
  border-right: 1px solid #cdc7c0;
}
.tasks span { white-space: nowrap; }
.minimized svg { opacity: .6; }
.tasks .current { background: linear-gradient(#a8a097, #bebbb7); border-color: #938c84; }
.trash { margin-left: auto; margin-right: 154px; }
.workspaces { display: grid; grid-template-columns: repeat(4, 34px); gap: 1px; padding-right: 2px; }
.workspaces button { display: grid; place-items: center; height: 22px; background: #aca8a3; }
.workspaces .on { border: 1px solid #fff; background: #ffb092; }
```
